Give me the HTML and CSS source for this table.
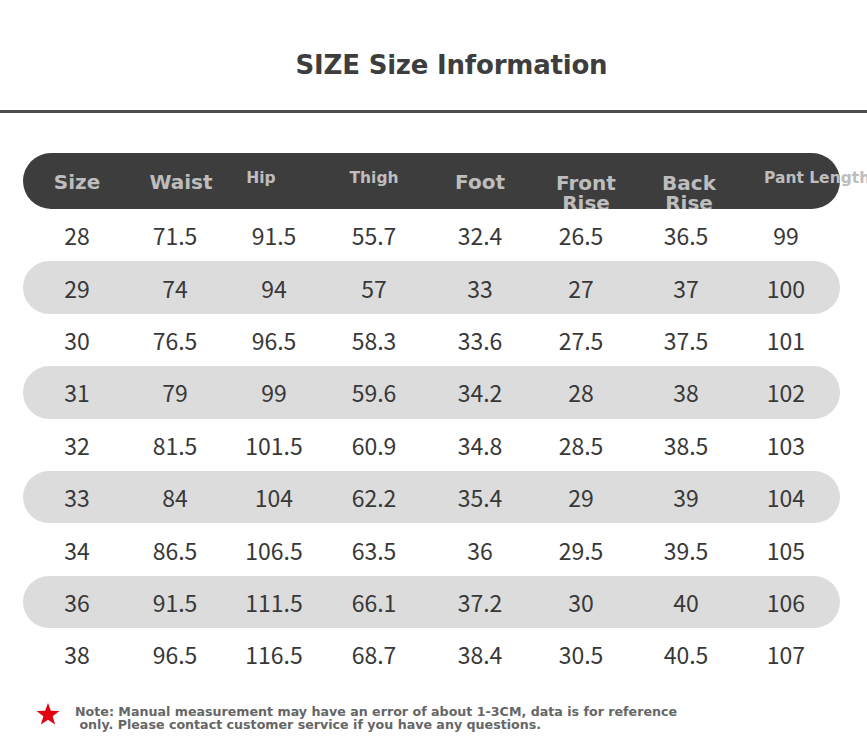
FILE: index.html
```html
<!DOCTYPE html>
<html lang="en">
<head>
<meta charset="utf-8">
<title>SIZE Size Information</title>
<link rel="stylesheet" href="styles.css">
</head>
<body>
<div class="page">
  <header class="title-wrap">
    <h1 class="title">SIZE Size Information</h1>
  </header>
  <div class="rule"></div>

  <section class="table">
    <div class="row head">
      <div class="h big">Size</div>
      <div class="h big waist">Waist</div>
      <div class="h small hip">Hip</div>
      <div class="h small">Thigh</div>
      <div class="h big">Foot</div>
      <div class="h two front"><span class="clip">Front<br>Rise</span></div>
      <div class="h two back"><span class="clip">Back<br>Rise</span></div>
      <div class="h small pant">Pant Length</div>
    </div>

    <div class="row"><div>28</div><div>71.5</div><div>91.5</div><div>55.7</div><div>32.4</div><div>26.5</div><div>36.5</div><div>99</div></div>
    <div class="row alt"><div>29</div><div>74</div><div>94</div><div>57</div><div>33</div><div>27</div><div>37</div><div>100</div></div>
    <div class="row"><div>30</div><div>76.5</div><div>96.5</div><div>58.3</div><div>33.6</div><div>27.5</div><div>37.5</div><div>101</div></div>
    <div class="row alt"><div>31</div><div>79</div><div>99</div><div>59.6</div><div>34.2</div><div>28</div><div>38</div><div>102</div></div>
    <div class="row"><div>32</div><div>81.5</div><div>101.5</div><div>60.9</div><div>34.8</div><div>28.5</div><div>38.5</div><div>103</div></div>
    <div class="row alt"><div>33</div><div>84</div><div>104</div><div>62.2</div><div>35.4</div><div>29</div><div>39</div><div>104</div></div>
    <div class="row"><div>34</div><div>86.5</div><div>106.5</div><div>63.5</div><div>36</div><div>29.5</div><div>39.5</div><div>105</div></div>
    <div class="row alt"><div>36</div><div>91.5</div><div>111.5</div><div>66.1</div><div>37.2</div><div>30</div><div>40</div><div>106</div></div>
    <div class="row"><div>38</div><div>96.5</div><div>116.5</div><div>68.7</div><div>38.4</div><div>30.5</div><div>40.5</div><div>107</div></div>
  </section>

  <footer class="note">
    <svg class="star" width="24" height="22" viewBox="0 0 24 22" aria-hidden="true">
      <polygon points="12,0 14.8,7.8 23.4,8.1 16.6,13.3 19.1,21.6 12,16.7 4.9,21.6 7.4,13.3 0.6,8.1 9.2,7.8" fill="#e3000f"/>
    </svg>
    <p class="note-text">Note: Manual measurement may have an error of about 1-3CM, data is for reference<br>&nbsp;only. Please contact customer service if you have any questions.</p>
  </footer>
</div>
</body>
</html>
```

FILE: styles.css
```css
html, body {
  margin: 0;
  padding: 0;
  background: #ffffff;
  overflow: hidden;
}

.page {
  width: 867px;
  height: 740px;
  overflow: hidden;
}

.title-wrap {
  height: 110px;
  display: flex;
  justify-content: center;
  align-items: flex-start;
}

.title {
  margin: 48px 0 0 0;
  font-family: "DejaVu Sans", sans-serif;
  font-weight: bold;
  font-size: 26px;
  line-height: 34px;
  color: #3e3e3e;
  letter-spacing: -0.2px;
  padding-left: 36px;
}

.rule {
  height: 3px;
  background: #4d4d4d;
}

.table {
  margin: 40px 27px 0 23px;
}

.row {
  display: grid;
  grid-template-columns: 98px 98px 100px 100px 112px 90px 120px 80px;
  padding-left: 5px;
  height: 52.4px;
  align-items: center;
  font-family: "Noto Sans CJK SC", "Noto Sans", sans-serif;
  font-size: 23px;
  color: #383838;
  text-align: center;
  border-radius: 27px;
}

.row > div {
  line-height: 30px;
}

.row.alt {
  background: #dcdcdc;
}

.row.head {
  height: 56px;
  background: #3d3d3d;
  border-radius: 28px;
  align-items: start;
  font-family: "DejaVu Sans", sans-serif;
  font-weight: bold;
  color: #bdbdbd;
}

.h.big {
  font-size: 20px;
  line-height: 24px;
  margin-top: 17px;
}

.h.small {
  font-size: 15.5px;
  line-height: 20px;
  margin-top: 15px;
}

.h.two {
  font-size: 20px;
  line-height: 20px;
  margin-top: 20px;
}

.clip {
  display: block;
  height: 36px;
  overflow: hidden;
}

.waist { padding-left: 12px; }
.hip { padding-right: 26px; }
.front { padding-left: 10px; }
.back { padding-left: 6px; }

.pant {
  text-align: left;
  padding-left: 18px;
  white-space: nowrap;
}

.note {
  display: flex;
  align-items: flex-start;
  margin: 21px 0 0 36px;
}

.star {
  display: block;
  margin-top: 1px;
  flex: none;
}

.note-text {
  margin: 3px 0 0 15px;
  font-family: "DejaVu Sans", sans-serif;
  font-weight: bold;
  font-size: 12.65px;
  line-height: 13px;
  color: #666666;
  letter-spacing: 0;
}
```
